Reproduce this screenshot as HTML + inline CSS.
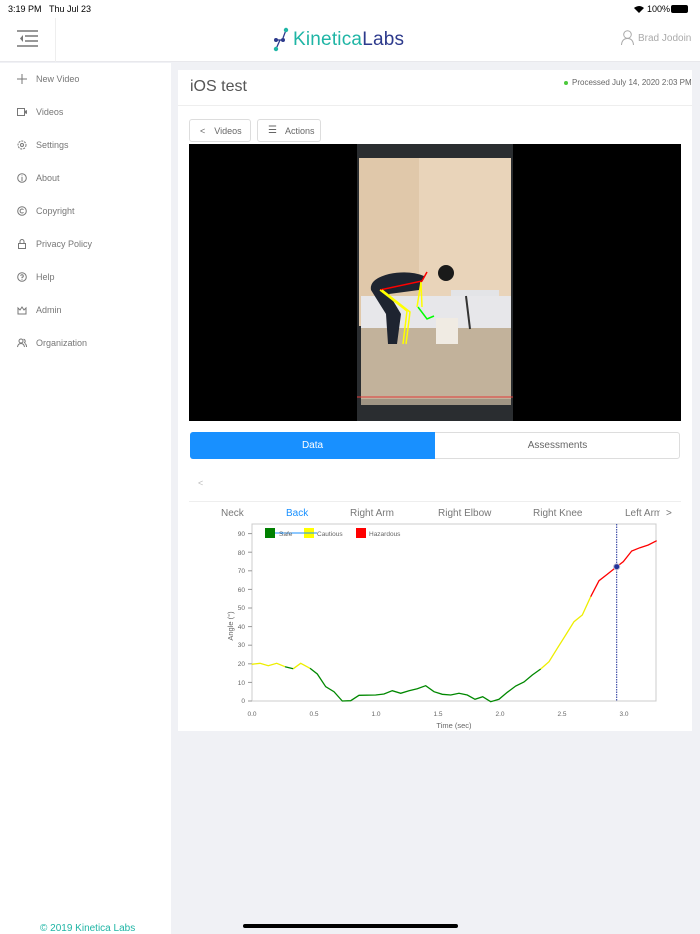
<!DOCTYPE html>
<html><head><meta charset="utf-8"><style>
*{margin:0;padding:0;box-sizing:border-box}
body{width:700px;height:934px;overflow:hidden;background:#f0f1f5;font-family:"Liberation Sans",sans-serif;position:relative;color:#666}
.abs{position:absolute}
.status{top:0;left:0;width:700px;height:18px;background:#fff;font-size:9px;color:#000}
.header{top:18px;left:0;width:700px;height:44px;background:#fff;border-bottom:1px solid #e8e8ec}
.side{top:63px;left:0;width:171px;height:871px;background:#fff}
.nav{position:absolute;left:17px;font-size:9px;color:#777;display:flex;align-items:center}
.nav svg{width:10px;height:10px;margin-right:9px}
.card{top:70px;left:178px;width:514px;height:661px;background:#fff}
.btn{position:absolute;top:119px;height:23px;border:1px solid #ddd;border-radius:3px;font-size:9px;color:#666;display:flex;align-items:center;padding-left:10px}
</style></head><body>
<div class="abs status"><span class="abs" style="left:8px;top:4px">3:19 PM&nbsp;&nbsp;&nbsp;Thu Jul 23</span>
<span class="abs" style="left:647px;top:4px">100%</span>
<svg class="abs" style="left:634px;top:5px" width="10" height="8" viewBox="0 0 10 8"><path d="M0 3 Q5 -1 10 3 L5 8Z" fill="#000"/></svg>
<div class="abs" style="left:671px;top:5px;width:17px;height:8px;border:1px solid #000;border-radius:2px;background:#000"></div></div>
<div class="abs header">
<svg class="abs" style="left:17px;top:12px" width="21" height="18"><g stroke="#777" stroke-width="1.5"><line x1="0" y1="1" x2="21" y2="1"/><line x1="8" y1="6" x2="21" y2="6"/><line x1="8" y1="11" x2="21" y2="11"/><line x1="0" y1="16" x2="21" y2="16"/></g><path d="M6 5 L3 8.5 L6 12Z" fill="#777"/></svg>
<div class="abs" style="left:55px;top:0;width:1px;height:44px;background:#eee"></div>
<svg class="abs" style="left:272px;top:9px" width="17" height="25"><g stroke="#2d3a8c" stroke-width="1.3"><line x1="14" y1="3" x2="11" y2="11"/><line x1="4" y1="13" x2="11" y2="13"/><line x1="8" y1="13" x2="4" y2="22"/></g><circle cx="14" cy="3" r="2.2" fill="#1fb5a5"/><circle cx="4" cy="13" r="2" fill="#2d3a8c"/><circle cx="11" cy="13" r="2" fill="#2d3a8c"/><circle cx="4" cy="22" r="2.2" fill="#1fb5a5"/></svg>
<div class="abs" style="left:293px;top:11px;font-size:19px;letter-spacing:0.2px"><span style="color:#1fb5a5">Kinetica</span><span style="color:#2d3a8c">Labs</span></div>
<svg class="abs" style="left:621px;top:12px" width="13" height="15"><circle cx="6.5" cy="4.5" r="3.8" fill="none" stroke="#aaa" stroke-width="1"/><path d="M0.5 15 Q1 8.5 6.5 8.5 Q12 8.5 12.5 15" fill="none" stroke="#aaa"/></svg>
<div class="abs" style="left:638px;top:15px;font-size:10px;color:#aaa">Brad Jodoin</div>
</div>
<div class="abs side">
<div class="nav" style="top:11px"><svg viewBox="0 0 10 10"><path d="M5 0V10M0 5H10" stroke="#777"/></svg>New Video</div>
<div class="nav" style="top:44px"><svg viewBox="0 0 10 10"><rect x=".5" y="1.5" width="7" height="7" fill="none" stroke="#777"/><path d="M7.5 4L10 3V7L7.5 6" fill="#777"/></svg>Videos</div>
<div class="nav" style="top:77px"><svg viewBox="0 0 10 10"><circle cx="5" cy="5" r="4" fill="none" stroke="#777" stroke-dasharray="2 1"/><circle cx="5" cy="5" r="1.5" fill="none" stroke="#777"/></svg>Settings</div>
<div class="nav" style="top:110px"><svg viewBox="0 0 10 10"><circle cx="5" cy="5" r="4.3" fill="none" stroke="#777"/><path d="M5 4V8M5 2.5V3.3" stroke="#777"/></svg>About</div>
<div class="nav" style="top:143px"><svg viewBox="0 0 10 10"><circle cx="5" cy="5" r="4.3" fill="none" stroke="#777"/><path d="M6.5 3.6A2 2 0 1 0 6.5 6.4" fill="none" stroke="#777"/></svg>Copyright</div>
<div class="nav" style="top:176px"><svg viewBox="0 0 10 10"><rect x="1.5" y="4.5" width="7" height="5" fill="none" stroke="#777"/><path d="M3 4.5V2.5A2 2 0 0 1 7 2.5V4.5" fill="none" stroke="#777"/></svg>Privacy Policy</div>
<div class="nav" style="top:209px"><svg viewBox="0 0 10 10"><circle cx="5" cy="5" r="4.3" fill="none" stroke="#777"/><path d="M3.7 3.8A1.3 1.3 0 1 1 5 5.3V6.3M5 7.3V8" fill="none" stroke="#777"/></svg>Help</div>
<div class="nav" style="top:242px"><svg viewBox="0 0 10 10"><path d="M1 9H9V3L7 5 5 2 3 5 1 3Z" fill="none" stroke="#777"/></svg>Admin</div>
<div class="nav" style="top:275px"><svg viewBox="0 0 10 10"><circle cx="4" cy="3" r="2" fill="none" stroke="#777"/><path d="M0.5 9Q1 5.5 4 5.5Q7 5.5 7.5 9M6.5 1.2A2 2 0 0 1 7 5M8 5.5Q9.5 6.5 9.5 9" fill="none" stroke="#777"/></svg>Organization</div>
<div class="abs" style="left:40px;top:860px;font-size:10px;color:#1fb5a5">© 2019 Kinetica Labs</div>
</div>
<div class="abs card">
<div class="abs" style="left:12px;top:8px;font-size:16px;color:#555">iOS test</div>
<div class="abs" style="left:386px;top:11px;width:4px;height:4px;border-radius:50%;background:#4cc93c"></div>
<div class="abs" style="left:394px;top:8px;font-size:8px;color:#666">Processed July 14, 2020 2:03 PM</div>
<div class="abs" style="left:0;top:35px;width:514px;height:1px;background:#eee"></div>
</div>
<div class="btn" style="left:189px;width:62px"><span style="margin-right:9px">&lt;</span>Videos</div>
<div class="btn" style="left:257px;width:64px"><span style="margin-right:8px;font-size:10px">☰</span>Actions</div>
<svg class="abs" style="left:189px;top:144px" width="492" height="277">
<rect width="492" height="277" fill="#000"/>
<rect x="168" y="0" width="156" height="277" fill="#2a2d30"/>
<rect x="170" y="14" width="152" height="168" fill="#e0c8aa"/>
<rect x="230" y="14" width="92" height="168" fill="#e9d4ba"/>
<rect x="172" y="152" width="150" height="32" fill="#e7e7ea"/>
<rect x="172" y="184" width="150" height="76" fill="#c2b29b"/>
<rect x="172" y="255" width="150" height="6" fill="#a09584"/>
<line x1="168" y1="253" x2="324" y2="253" stroke="#e23a3a"/>
<rect x="262" y="146" width="48" height="6" fill="#e3e4e7"/>
<line x1="277" y1="152" x2="281" y2="185" stroke="#333" stroke-width="2"/>
<path d="M235 132Q220 126 200 130Q180 135 182 146L197 170L199 200L208 200L212 170L200 150L230 146Z" fill="#1e2430"/>
<circle cx="257" cy="129" r="8" fill="#1a1a1a"/>
<rect x="247" y="174" width="22" height="26" fill="#f0ebe3"/>
<path d="M191 146L233 137L238 128" stroke="#f00" stroke-width="1.5" fill="none"/>
<path d="M191 146L218 167L214 200M193 146L221 168L217 200" stroke="#ff0" stroke-width="1.5" fill="none"/>
<path d="M232 138L228 163M232 138L233 163" stroke="#ff0" stroke-width="1.5" fill="none"/>
<path d="M229 163L238 175L245 172" stroke="#0f0" stroke-width="1.5" fill="none"/>
</svg>
<div class="abs" style="left:190px;top:432px;width:490px;height:27px;border:1px solid #ddd;border-radius:3px;background:#fff"></div>
<div class="abs" style="left:190px;top:432px;width:245px;height:27px;background:#1890ff;border-radius:3px 0 0 3px;color:#fff;font-size:10px;text-align:center;line-height:27px">Data</div>
<div class="abs" style="left:435px;top:432px;width:245px;height:27px;color:#666;font-size:10px;text-align:center;line-height:27px">Assessments</div>
<div class="abs" style="left:198px;top:478px;font-size:9px;color:#bbb">&lt;</div>
<div class="abs" style="left:189px;top:501px;width:492px;height:1px;background:#eee"></div>
<div class="abs" style="top:508px;font-size:10px;color:#777;left:0;width:700px;height:14px">
<span class="abs" style="left:221px">Neck</span><span class="abs" style="left:286px;color:#1890ff">Back</span><span class="abs" style="left:350px">Right Arm</span><span class="abs" style="left:438px">Right Elbow</span><span class="abs" style="left:533px">Right Knee</span><span class="abs" style="left:625px">Left Arm</span></div>
<div class="abs" style="left:660px;top:505px;width:20px;height:18px;background:#fff"></div><span class="abs" style="left:666px;top:508px;font-size:10px;color:#777">&gt;</span>
<svg class="abs" style="left:200px;top:520px" width="480" height="212" font-family="Liberation Sans" font-size="6.5" fill="#666">
<g transform="translate(-200,-520)">
<rect x="252" y="524" width="404" height="177" fill="none" stroke="#ccc"/>
<g stroke="#999"><line x1="248" y1="701" x2="252" y2="701"/><line x1="248" y1="682.4" x2="252" y2="682.4"/><line x1="248" y1="663.8" x2="252" y2="663.8"/><line x1="248" y1="645.2" x2="252" y2="645.2"/><line x1="248" y1="626.6" x2="252" y2="626.6"/><line x1="248" y1="608" x2="252" y2="608"/><line x1="248" y1="589.4" x2="252" y2="589.4"/><line x1="248" y1="570.8" x2="252" y2="570.8"/><line x1="248" y1="552.2" x2="252" y2="552.2"/><line x1="248" y1="533.6" x2="252" y2="533.6"/></g>
<g text-anchor="end"><text x="245" y="703">0</text><text x="245" y="685">10</text><text x="245" y="666">20</text><text x="245" y="647">30</text><text x="245" y="629">40</text><text x="245" y="610">50</text><text x="245" y="592">60</text><text x="245" y="573">70</text><text x="245" y="555">80</text><text x="245" y="536">90</text></g>
<g text-anchor="middle"><text x="252" y="716">0.0</text><text x="314" y="716">0.5</text><text x="376" y="716">1.0</text><text x="438" y="716">1.5</text><text x="500" y="716">2.0</text><text x="562" y="716">2.5</text><text x="624" y="716">3.0</text><text x="454" y="728" font-size="7.5">Time (sec)</text></g>
<text transform="translate(233,626) rotate(-90)" font-size="7.5" text-anchor="middle">Angle (°)</text>
<rect x="265" y="528" width="10" height="10" fill="#008000"/><rect x="304" y="528" width="10" height="10" fill="#ff0"/><rect x="356" y="528" width="10" height="10" fill="#f00"/>
<line x1="275" y1="533" x2="317" y2="533" stroke="#1890ff"/>
<text x="279" y="536">Safe</text><text x="317" y="536">Cautious</text><text x="369" y="536">Hazardous</text>
<g fill="none" stroke-width="1.3">
<polyline stroke="#ee0" points="251.7,664.3 260,663.3 268.3,665.7 276.7,663.3 285,666.7"/>
<polyline stroke="#080" points="285,666.7 293.3,668.7"/>
<polyline stroke="#ee0" points="293.3,668.7 300.7,663.3 310,668.3"/>
<polyline stroke="#080" points="310,668.3 317.3,674 325.7,686.7 334,691.7 342.3,701 350.7,700.7 359,695.3 375.7,695 384,694 392.3,690.7 400.7,693.3 409,690.7 417.3,688.7 425.7,685.7 434,691.7 442.3,694.3 450.7,695 459,693.3 467.3,695 475,699.3 482.7,696.7 490.7,701.7 499,699.3 507.3,692.3 515.7,686 524,682 532.3,675 540.7,669"/>
<polyline stroke="#ee0" points="540.7,669 549,661.7 557.3,648.3 565.7,635 574,621.7 582.3,615 590.7,596.7"/>
<polyline stroke="#f00" points="590.7,596.7 599,580.7 607.3,574.3 616.7,566.7 623.3,561.7 631.7,551 640,547.7 648.3,545 656.7,540.7"/>
</g>
<line x1="616.7" y1="524" x2="616.7" y2="701" stroke="#22329a" stroke-dasharray="1.5 1"/>
<circle cx="616.7" cy="566.7" r="3" fill="#22329a" stroke="#bbc" stroke-width="1"/>
</g></svg>
<div class="abs" style="left:243px;top:924px;width:215px;height:4px;border-radius:2px;background:#000"></div>
</body></html>
